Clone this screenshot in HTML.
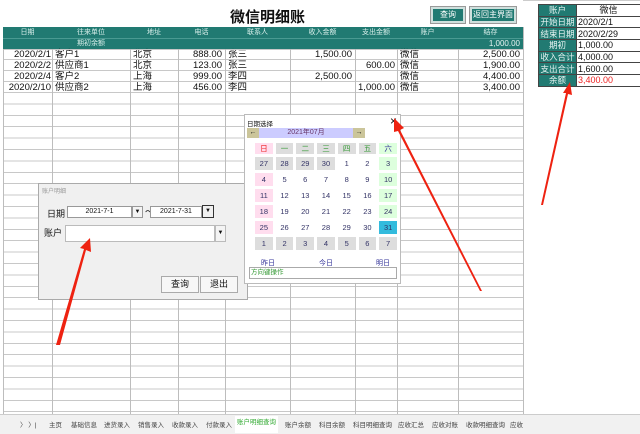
<!DOCTYPE html><html><head><meta charset="utf-8"><style>
*{margin:0;padding:0;box-sizing:border-box}
body{width:640px;height:434px;overflow:hidden;background:#fff;font-family:"Liberation Sans","Noto Sans CJK SC",sans-serif;font-size:9px;position:relative;color:#111}
.a{position:absolute}
.grid{left:3px;top:93px;width:520px;height:321px;background:repeating-linear-gradient(to bottom,transparent 0 10.4px,#c8c8c8 10.4px 11.4px)}
.vl{position:absolute;width:1px;background:#bdbdbd;top:27px;height:387px}
.hd{background:#217a72;color:#d8eeea;font-size:7px;text-align:center;line-height:11px}
.row div{position:absolute;height:11px;line-height:11px;font-size:9.5px;white-space:nowrap}
.rp{table-layout:fixed}
.rp td{border:1px solid #444;height:11.7px;font-size:9px;padding:0 1px;line-height:10px;white-space:nowrap;overflow:hidden}
.rp td.l{background:#217a72;color:#e6f3f1;text-align:center;font-size:8.5px;padding:0}
.btn{background:#217a72;color:#fff;border:2px solid #cfe0dd;outline:1px solid #999;text-align:center;font-size:8px;line-height:12px;white-space:nowrap}
.cal td{width:18px;height:13px;text-align:center;font-size:7.5px;color:#336}
.cal{border-spacing:3px 3px}
.tabs span{position:absolute;top:419px;font-size:6.5px;color:#444;white-space:nowrap}
</style></head><body>
<div class="a grid"></div>
<div class="vl" style="left:3px"></div><div class="vl" style="left:52px"></div><div class="vl" style="left:130px"></div><div class="vl" style="left:178px"></div><div class="vl" style="left:225px"></div><div class="vl" style="left:290px"></div><div class="vl" style="left:355px"></div><div class="vl" style="left:397px"></div><div class="vl" style="left:458px"></div><div class="vl" style="left:523px"></div>
<div class="a" style="left:0;top:0;width:640px;height:1px;background:#ccc"></div>
<div class="a" style="left:0;top:27px;width:523px;height:66px;background:#fff"></div>
<div class="a" style="left:0;top:0;width:523px;height:27px;background:#fff"></div>
<div class="a" style="left:230px;top:6px;font-size:15px;font-weight:bold">微信明细账</div>
<div class="a btn" style="left:431px;top:7px;width:34px;height:16px">查询</div>
<div class="a btn" style="left:470px;top:7px;width:46px;height:16px">返回主界面</div>
<div class="a hd" style="left:3px;top:27px;width:520px;height:22px"></div>
<div class="a hd" style="left:3px;top:27px;width:49px">日期</div>
<div class="a hd" style="left:52px;top:27px;width:78px">往来单位</div>
<div class="a hd" style="left:130px;top:27px;width:48px">地址</div>
<div class="a hd" style="left:178px;top:27px;width:47px">电话</div>
<div class="a hd" style="left:225px;top:27px;width:65px">联系人</div>
<div class="a hd" style="left:290px;top:27px;width:65px">收入金额</div>
<div class="a hd" style="left:355px;top:27px;width:42px">支出金额</div>
<div class="a hd" style="left:397px;top:27px;width:61px">账户</div>
<div class="a hd" style="left:458px;top:27px;width:65px">结存</div>
<div class="a hd" style="left:52px;top:38px;width:78px">期初余额</div>
<div class="a" style="left:458px;top:38px;width:62px;text-align:right;color:#e6f3f1;font-size:8px;line-height:11px">1,000.00</div>
<div class="a" style="left:3px;top:38px;width:520px;height:1px;background:#4a9a92"></div>
<div class="row">
<div style="left:3px;top:49px;width:48px;text-align:right">2020/2/1</div><div style="left:55px;top:49px">客户1</div><div style="left:133px;top:49px">北京</div><div style="left:178px;top:49px;width:44px;text-align:right">888.00</div><div style="left:228px;top:49px">张三</div><div style="left:290px;top:49px;width:62px;text-align:right">1,500.00</div><div style="left:400px;top:49px">微信</div><div style="left:458px;top:49px;width:62px;text-align:right">2,500.00</div>
<div style="left:3px;top:60px;width:48px;text-align:right">2020/2/2</div><div style="left:55px;top:60px">供应商1</div><div style="left:133px;top:60px">北京</div><div style="left:178px;top:60px;width:44px;text-align:right">123.00</div><div style="left:228px;top:60px">张三</div><div style="left:355px;top:60px;width:40px;text-align:right">600.00</div><div style="left:400px;top:60px">微信</div><div style="left:458px;top:60px;width:62px;text-align:right">1,900.00</div>
<div style="left:3px;top:71px;width:48px;text-align:right">2020/2/4</div><div style="left:55px;top:71px">客户2</div><div style="left:133px;top:71px">上海</div><div style="left:178px;top:71px;width:44px;text-align:right">999.00</div><div style="left:228px;top:71px">李四</div><div style="left:290px;top:71px;width:62px;text-align:right">2,500.00</div><div style="left:400px;top:71px">微信</div><div style="left:458px;top:71px;width:62px;text-align:right">4,400.00</div>
<div style="left:3px;top:82px;width:48px;text-align:right">2020/2/10</div><div style="left:55px;top:82px">供应商2</div><div style="left:133px;top:82px">上海</div><div style="left:178px;top:82px;width:44px;text-align:right">456.00</div><div style="left:228px;top:82px">李四</div><div style="left:355px;top:82px;width:40px;text-align:right">1,000.00</div><div style="left:400px;top:82px">微信</div><div style="left:458px;top:82px;width:62px;text-align:right">3,400.00</div>
</div>
<svg class="a" style="left:0;top:0" width="524" height="94"><g stroke="#c8c8c8"><line x1="3" y1="59.5" x2="523" y2="59.5"/><line x1="3" y1="70.5" x2="523" y2="70.5"/><line x1="3" y1="81.5" x2="523" y2="81.5"/><line x1="3" y1="92.5" x2="523" y2="92.5"/><line x1="3" y1="49.5" x2="523" y2="49.5"/></g><g stroke="#bdbdbd"><line x1="3.5" y1="49" x2="3.5" y2="93"/><line x1="52.5" y1="49" x2="52.5" y2="93"/><line x1="130.5" y1="49" x2="130.5" y2="93"/><line x1="178.5" y1="49" x2="178.5" y2="93"/><line x1="225.5" y1="49" x2="225.5" y2="93"/><line x1="290.5" y1="49" x2="290.5" y2="93"/><line x1="355.5" y1="49" x2="355.5" y2="93"/><line x1="397.5" y1="49" x2="397.5" y2="93"/><line x1="458.5" y1="49" x2="458.5" y2="93"/><line x1="523.5" y1="49" x2="523.5" y2="93"/></g></svg>
<table class="a rp" style="left:538px;top:4px;width:102px;border-collapse:collapse">
<colgroup><col style="width:38px"><col style="width:64px"></colgroup>
<tr><td class="l">账户</td><td style="text-align:center">微信</td></tr>
<tr><td class="l">开始日期</td><td>2020/2/1</td></tr>
<tr><td class="l">结束日期</td><td>2020/2/29</td></tr>
<tr><td class="l">期初</td><td>1,000.00</td></tr>
<tr><td class="l">收入合计</td><td>4,000.00</td></tr>
<tr><td class="l">支出合计</td><td>1,600.00</td></tr>
<tr><td class="l">余额</td><td style="color:#e22">3,400.00</td></tr>
</table>
<!-- form dialog -->
<div class="a" style="left:38px;top:183px;width:210px;height:117px;background:#f0f0f0;border:1px solid #aaa">
<div class="a" style="left:3px;top:2px;font-size:6px;color:#999">账户明细</div>
<div class="a" style="left:8px;top:23px;font-size:9px">日期</div>
<div class="a" style="left:28px;top:22px;width:65px;height:12px;background:#fff;border:1px solid #999;font-size:7px;text-align:center;line-height:10px">2021-7-1</div>
<div class="a" style="left:93px;top:22px;width:11px;height:12px;border:1px solid #999;font-size:6px;text-align:center;line-height:10px;background:#f4f4f4">▼</div>
<div class="a" style="left:106px;top:21px;font-size:9px">～</div>
<div class="a" style="left:111px;top:22px;width:52px;height:12px;background:#fff;border:1px solid #999;font-size:7px;text-align:center;line-height:10px">2021-7-31</div>
<div class="a" style="left:163px;top:21px;width:12px;height:13px;border:1px solid #333;font-size:6px;text-align:center;line-height:11px">▼</div>
<div class="a" style="left:5px;top:42px;font-size:9px">账户</div>
<div class="a" style="left:26px;top:41px;width:150px;height:17px;background:#fff;border:1px solid #bbb"></div>
<div class="a" style="left:176px;top:41px;width:11px;height:17px;border:1px solid #bbb;background:#f4f4f4;font-size:6px;text-align:center;line-height:15px">▼</div>
<div class="a" style="left:122px;top:92px;width:38px;height:17px;border:1px solid #aaa;background:#f7f7f7;text-align:center;line-height:15px">查询</div>
<div class="a" style="left:161px;top:92px;width:38px;height:17px;border:1px solid #aaa;background:#f7f7f7;text-align:center;line-height:15px">退出</div>
</div>
<!-- calendar -->
<div class="a" style="left:244px;top:114px;width:157px;height:170px;background:#fff;border:1px solid #bbb">
<div class="a" style="left:2px;top:3px;font-size:6.5px">日期选择</div>
<div class="a" style="left:145px;top:-1px;font-size:12px">×</div>
<div class="a" style="left:2px;top:13px;width:12px;height:10px;background:#cbc59a;font-size:7px;line-height:9px;text-align:center">←</div>
<div class="a" style="left:14px;top:13px;width:94px;height:10px;background:#ccccff;font-size:7px;line-height:10px;text-align:center;color:#636">2021年07月</div>
<div class="a" style="left:108px;top:13px;width:12px;height:10px;background:#cbc59a;font-size:7px;line-height:9px;text-align:center">→</div>
<table class="a cal" style="left:7px;top:25px;border-collapse:separate">
<tr><td style="height:10px;background:#fde;color:#e22">日</td><td style="height:10px;background:#ddd;color:#393">一</td><td style="height:10px;background:#ddd;color:#393">二</td><td style="height:10px;background:#ddd;color:#393">三</td><td style="height:10px;background:#ddd;color:#393">四</td><td style="height:10px;background:#ddd;color:#393">五</td><td style="height:10px;background:#dfd;color:#339">六</td></tr>
<tr><td style="background:#ddd">27</td><td style="background:#ddd">28</td><td style="background:#ddd">29</td><td style="background:#ddd">30</td><td>1</td><td>2</td><td style="background:#dfd">3</td></tr>
<tr><td style="background:#fde">4</td><td>5</td><td>6</td><td>7</td><td>8</td><td>9</td><td style="background:#dfd">10</td></tr>
<tr><td style="background:#fde">11</td><td>12</td><td>13</td><td>14</td><td>15</td><td>16</td><td style="background:#dfd">17</td></tr>
<tr><td style="background:#fde">18</td><td>19</td><td>20</td><td>21</td><td>22</td><td>23</td><td style="background:#dfd">24</td></tr>
<tr><td style="background:#fde">25</td><td>26</td><td>27</td><td>28</td><td>29</td><td>30</td><td style="background:#3bd">31</td></tr>
<tr><td style="background:#ddd">1</td><td style="background:#ddd">2</td><td style="background:#ddd">3</td><td style="background:#ddd">4</td><td style="background:#ddd">5</td><td style="background:#ddd">6</td><td style="background:#ddd">7</td></tr>
</table>
<div class="a" style="left:16px;top:143px;font-size:7px;color:#339">昨日</div>
<div class="a" style="left:74px;top:143px;font-size:7px;color:#339">今日</div>
<div class="a" style="left:131px;top:143px;font-size:7px;color:#339">明日</div>
<div class="a" style="left:4px;top:152px;width:148px;height:12px;border:1px solid #aaa;font-size:6.5px;color:#393;line-height:10px;padding-left:1px">方向键操作</div>
</div>
<!-- tabs -->
<div class="a" style="left:0;top:414px;width:640px;height:20px;background:#f1f1f1;border-top:1px solid #ccc"></div>
<div class="a tabs" style="left:0;top:0">
<span style="left:20px">〉 〉|</span><span style="left:49px">主页</span><span style="left:71px">基础信息</span><span style="left:104px">进货录入</span><span style="left:138px">销售录入</span><span style="left:172px">收款录入</span><span style="left:206px">付款录入</span>
<span style="left:235px;top:416px;width:43px;height:17px;background:#fff;color:#3a3;text-align:center;line-height:13px">账户明细查询</span>
<span style="left:285px">账户余额</span><span style="left:319px">科目余额</span><span style="left:353px">科目明细查询</span><span style="left:398px">应收汇总</span><span style="left:432px">应收对账</span><span style="left:466px">收款明细查询</span><span style="left:510px">应收</span>
</div>
<svg class="a" style="left:0;top:0" width="640" height="434">
<g fill="#ee2211">
<polygon points="56,345 60,345 86,250 91,252 90,238 80,248 84,249"/>
<polygon points="480,291 482,291 400,130 404,128 394,118 394,132 398,131"/>
<polygon points="541,205 543,205 568,94 572,95 570,82 563,93 566,93"/>
</g></svg>
</body></html>
